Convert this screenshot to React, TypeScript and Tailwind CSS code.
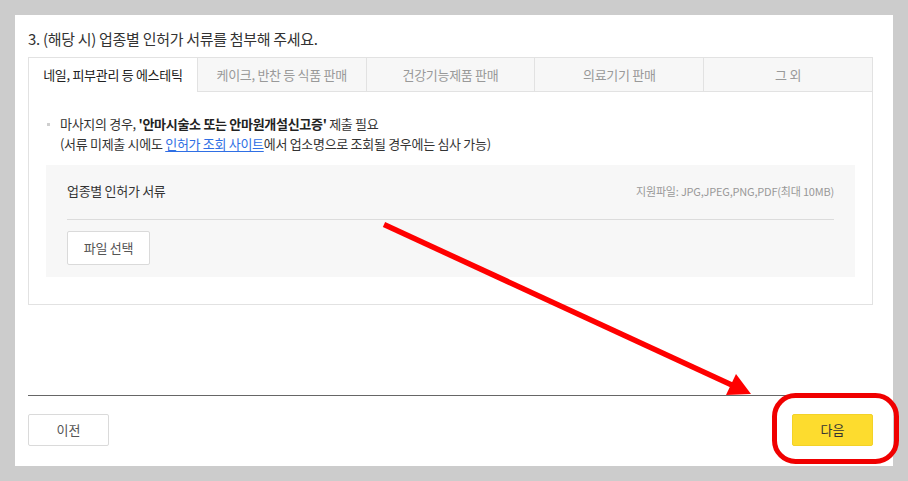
import React from "react";

const tabs = ["네일, 피부관리 등 에스테틱", "케이크, 반찬 등 식품 판매", "건강기능제품 판매", "의료기기 판매", "그 외"];

export default function App() {
  return (
    <div
      className="relative w-[908px] h-[481px] bg-[#cccccc] p-[15px] overflow-hidden"
      style={{ fontFamily: '"Noto Sans CJK KR", "Noto Sans", sans-serif' }}
    >
      <div className="w-[878px] h-[451px] bg-white pl-[13px] pr-[20px] pt-[14px] flex flex-col">
        {/* Title */}
        <h2 className="text-[15px] leading-[20px] text-[#333] tracking-[-0.3px]">
          3. (해당 시) 업종별 인허가 서류를 첨부해 주세요.
        </h2>

        {/* Tabs box */}
        <div className="mt-[8px] border border-[#e2e2e2]">
          <div className="flex h-[34px]">
            {tabs.map((t, i) => (
              <div
                key={t}
                className={
                  i === 0
                    ? "flex-1 flex items-center justify-center bg-white text-[13px] text-[#222] tracking-[-0.3px]"
                    : "flex-1 flex items-center justify-center bg-[#f7f7f7] border-l border-b border-[#e2e2e2] text-[13px] text-[#999] tracking-[-0.3px]"
                }
              >
                {t}
              </div>
            ))}
          </div>

          <div className="px-[17px] pt-[22px] pb-[27px]">
            <div className="text-[13px] leading-[20px] text-[#333] tracking-[-0.3px]">
              <div className="flex items-center">
                <span className="w-[3px] h-[3px] bg-[#cfcfcf] ml-[1px] mr-[10px]" />
                <span>
                  마사지의 경우, <b className="font-bold text-[#222]">'안마시술소 또는 안마원개설신고증'</b> 제출 필요
                </span>
              </div>
              <div className="pl-[14px]">
                (서류 미제출 시에도{" "}
                <a href="#" className="text-[#2f6fe4] underline underline-offset-2">
                  인허가 조회 사이트
                </a>
                에서 업소명으로 조회될 경우에는 심사 가능)
              </div>
            </div>

            {/* Upload box */}
            <div className="mt-[11px] bg-[#f7f7f7] px-[21px] pb-[12px]">
              <div className="flex items-center justify-between pt-[16px] pb-[18px] border-b border-[#dcdcdc]">
                <span className="text-[13px] leading-[20px] text-[#333] tracking-[-0.3px]">업종별 인허가 서류</span>
                <span className="text-[11px] leading-[20px] text-[#999] tracking-[-0.2px]">
                  지원파일: JPG,JPEG,PNG,PDF(최대 10MB)
                </span>
              </div>
              <button className="mt-[11px] w-[83px] h-[34px] bg-white border border-[#dadada] rounded-[2px] text-[13px] text-[#555] tracking-[-0.3px]">
                파일 선택
              </button>
            </div>
          </div>
        </div>

        {/* Footer */}
        <div className="mt-auto border-t border-[#666] pt-[18px] pb-[20px] flex justify-between">
          <button className="w-[81px] h-[32px] bg-white border border-[#dadada] rounded-[2px] text-[13px] text-[#555]">
            이전
          </button>
          <button className="w-[81px] h-[32px] bg-[#fddc2e] border border-[#f3d227] rounded-[2px] text-[13px] text-[#333]">
            다음
          </button>
        </div>
      </div>

      {/* Annotation overlay */}
      <svg className="absolute inset-0 pointer-events-none" width="908" height="481" viewBox="0 0 908 481">
        <line x1="384" y1="224.5" x2="734" y2="386" stroke="#ff0000" strokeWidth="5.5" />
        <polygon points="751,394 726,395 736,374" fill="#ff0000" />
        <rect x="774.5" y="395.5" width="122" height="66" rx="21" fill="none" stroke="#f00000" strokeWidth="5" />
      </svg>
    </div>
  );
}
